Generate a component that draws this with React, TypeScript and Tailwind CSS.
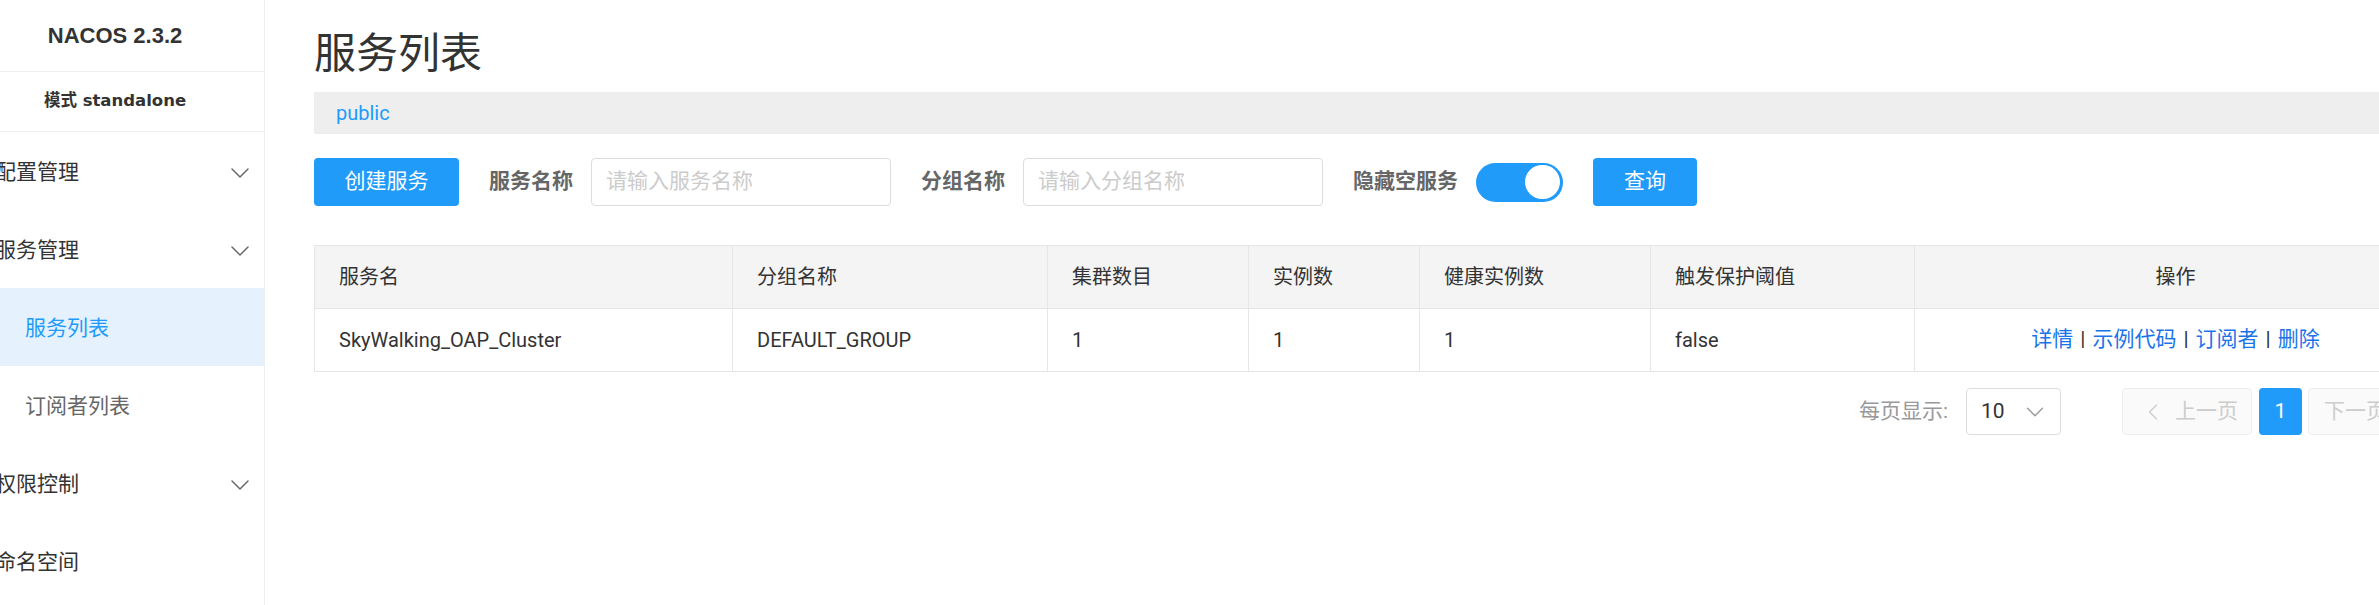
import { ChevronDown, ChevronLeft, ChevronRight } from "lucide-react";

const columns = [
  { title: "服务名", width: "w-[418px]" },
  { title: "分组名称", width: "w-[315px]" },
  { title: "集群数目", width: "w-[201px]" },
  { title: "实例数", width: "w-[171px]" },
  { title: "健康实例数", width: "w-[231px]" },
  { title: "触发保护阈值", width: "w-[264px]" },
  { title: "操作", width: "w-[522px]" },
];

const row = ["SkyWalking_OAP_Cluster", "DEFAULT_GROUP", "1", "1", "1", "false"];

const actions = ["详情", "示例代码", "订阅者", "删除"];

function MenuItem({
  label,
  sub,
  active,
  arrow,
}: {
  label: string;
  sub?: boolean;
  active?: boolean;
  arrow?: boolean;
}) {
  return (
    <div
      className={
        "flex h-[78px] items-center justify-between pr-[8px] pt-[4px] text-[21px] " +
        (active ? "bg-[#e5f2fd] text-[#209bfa] " : sub ? "text-[#666] " : "text-[#333] ") +
        (sub ? "pl-[25px]" : "pl-0")
      }
    >
      <span className={sub ? "" : "-ml-[5px]"}>{label}</span>
      {arrow && <ChevronDown className="h-[32px] w-[32px] text-[#666]" strokeWidth={1.1} />}
    </div>
  );
}

function Sidebar() {
  return (
    <aside className="h-full w-[265px] shrink-0 border-r border-[#eee] bg-white">
      <div className="flex h-[72px] items-center justify-center border-b border-[#eee] pr-[34px] font-['Liberation_Sans',Arial,sans-serif] text-[22px] font-bold text-[#333]">
        NACOS 2.3.2
      </div>
      <div className="flex h-[60px] items-center justify-center border-b border-[#eee] pr-[34px] font-['DejaVu_Sans','Noto_Sans_CJK_SC',sans-serif] text-[16.5px] font-bold text-[#333]">
        模式 standalone
      </div>
      <MenuItem label="配置管理" arrow />
      <MenuItem label="服务管理" arrow />
      <MenuItem label="服务列表" sub active />
      <MenuItem label="订阅者列表" sub />
      <MenuItem label="权限控制" arrow />
      <MenuItem label="命名空间" />
    </aside>
  );
}

function Field({ label, placeholder }: { label: string; placeholder: string }) {
  return (
    <div className="flex items-center gap-[18px]">
      <span className="text-[21px] font-bold text-[#666]">{label}</span>
      <div className="flex h-[48px] w-[300px] items-center rounded-[4px] border border-[#ddd] px-[14px] text-[21px] text-[#ccc]">
        {placeholder}
      </div>
    </div>
  );
}

export default function App() {
  return (
    <div className="flex h-[605px] w-full overflow-hidden bg-white font-['Roboto','Noto_Sans_CJK_SC',sans-serif]">
      <Sidebar />

      <main className="min-w-0 flex-1 overflow-hidden pl-[49px]">
        <h1 className="pt-[33px] text-[42px] leading-[42px] text-[#333]">服务列表</h1>

        <div className="mt-[17px] flex h-[42px] w-[2122px] items-center bg-[#eee] pl-[22px] text-[20px] text-[#209bfa]">
          public
        </div>

        <div className="mt-[24px] flex h-[48px] items-center gap-[30px]">
          <button
            type="button"
            className="h-[48px] w-[145px] rounded-[4px] bg-[#209bfa] text-[21px] text-white"
          >
            创建服务
          </button>
          <Field label="服务名称" placeholder="请输入服务名称" />
          <Field label="分组名称" placeholder="请输入分组名称" />
          <div className="flex items-center gap-[18px]">
            <span className="text-[21px] font-bold text-[#666]">隐藏空服务</span>
            <div className="flex h-[39px] w-[87px] items-center justify-end rounded-full bg-[#209bfa] pr-[3px]">
              <div className="h-[34px] w-[35px] rounded-full bg-white" />
            </div>
          </div>
          <button
            type="button"
            className="h-[48px] w-[104px] rounded-[4px] bg-[#209bfa] text-[21px] text-white"
          >
            查询
          </button>
        </div>

        <table className="mt-[39px] w-[2122px] table-fixed border-collapse border border-[#e6e6e6] text-[20px] text-[#333]">
          <colgroup>
            {columns.map((c) => (
              <col key={c.title} className={c.width} />
            ))}
          </colgroup>
          <thead>
            <tr className="h-[63px] bg-[#f4f4f4]">
              {columns.map((c, i) => (
                <th
                  key={c.title}
                  className={
                    "border border-[#e6e6e6] font-normal " +
                    (i === columns.length - 1 ? "text-center" : "pl-[24px] text-left")
                  }
                >
                  {c.title}
                </th>
              ))}
            </tr>
          </thead>
          <tbody>
            <tr className="h-[63px]">
              {row.map((v, i) => (
                <td key={i} className="border border-[#e6e6e6] pl-[24px]">
                  {v}
                </td>
              ))}
              <td className="border border-[#e6e6e6] text-center text-[21px]">
                {actions.map((a, i) => (
                  <span key={a}>
                    {i > 0 && <span className="mx-[7px] text-[#333]">|</span>}
                    <span className="text-[#1a73e8]">{a}</span>
                  </span>
                ))}
              </td>
            </tr>
          </tbody>
        </table>

        <div className="mt-[16px] flex h-[47px] w-[2124px] items-center justify-end">
          <span className="mr-[18px] text-[21px] text-[#999]">每页显示:</span>
          <div className="mr-[61px] flex h-[47px] w-[95px] items-center justify-between rounded-[4px] border border-[#ddd] pl-[14px] pr-[10px] text-[21px] text-[#333]">
            10
            <ChevronDown className="h-[30px] w-[30px] text-[#999]" strokeWidth={1.1} />
          </div>
          <div className="flex h-[47px] w-[130px] items-center gap-[8px] rounded-[4px] border border-[#eee] bg-[#fafafa] pl-[16px] text-[21px] text-[#ccc]">
            <ChevronLeft className="h-[28px] w-[28px]" strokeWidth={1.2} />
            上一页
          </div>
          <div className="ml-[7px] flex h-[47px] w-[43px] items-center justify-center rounded-[4px] bg-[#209bfa] text-[21px] text-white">
            1
          </div>
          <div className="ml-[6px] flex h-[47px] w-[130px] items-center gap-[8px] rounded-[4px] border border-[#eee] bg-[#fafafa] pl-[15px] text-[21px] text-[#ccc]">
            下一页
            <ChevronRight className="h-[28px] w-[28px]" strokeWidth={1.2} />
          </div>
        </div>
      </main>
    </div>
  );
}
